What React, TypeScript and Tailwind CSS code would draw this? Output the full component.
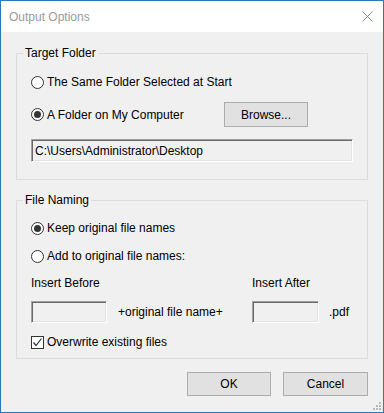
import React, { useState } from 'react';

const font = { fontFamily: '"Liberation Sans", Arial, sans-serif' };

const Radio: React.FC<{ checked: boolean; label: string; onClick: () => void }> = ({ checked, label, onClick }) => (
    <div className="flex items-center h-[20px] cursor-default" onClick={onClick}>
        <span className="w-[13px] h-[13px] rounded-full border border-[#333] bg-white flex items-center justify-center">
            {checked && <span className="w-[7px] h-[7px] rounded-full bg-[#333]"></span>}
        </span>
        <span className="ml-[3px]">{label}</span>
    </div>
);

const Sunken: React.FC<{ className?: string; children?: React.ReactNode }> = ({ className, children }) => (
    <div
        className={`bg-[#f0f0f0] border-t border-l border-[#a0a0a0] border-b border-r border-b-white border-r-white shadow-[inset_1px_1px_0_#696969,inset_-1px_-1px_0_#e3e3e3] ${className ?? ''}`}
    >
        {children}
    </div>
);

const Button: React.FC<{ label: string; className?: string }> = ({ label, className }) => (
    <button
        type="button"
        className={`bg-[#e1e1e1] border border-[#adadad] text-[12px] text-black flex items-center justify-center ${className ?? ''}`}
    >
        {label}
    </button>
);

const App: React.FC = () => {
    const [target, setTarget] = useState<'same' | 'computer'>('computer');
    const [naming, setNaming] = useState<'keep' | 'add'>('keep');
    const [overwrite, setOverwrite] = useState(true);

    return (
        <div style={font} className="w-[384px] h-[413px] border border-[#2b79b8] bg-[#f0f0f0] flex flex-col text-[12px] text-black leading-[14px] select-none">
            {/* Title bar */}
            <div className="h-[31px] bg-white flex items-center justify-between pl-[8px] pr-[9px]">
                <span className="text-[12px] text-[#9a9a9a]">Output Options</span>
                <svg width="11" height="11" viewBox="0 0 11 11" className="mr-[1px]">
                    <path d="M0.5 0.5 L10.5 10.5 M10.5 0.5 L0.5 10.5" stroke="#8a8a8a" strokeWidth="1" />
                </svg>
            </div>

            <div className="flex-1 flex flex-col px-[15px] pt-[14px] relative">
                {/* Target Folder */}
                <fieldset className="border border-[#dcdcdc] px-[14px] pb-[17px]">
                    <legend className="-ml-[8px] px-[2px] leading-[14px]">Target Folder</legend>
                    <div className="mt-[12px]">
                        <Radio checked={target === 'same'} label="The Same Folder Selected at Start" onClick={() => setTarget('same')} />
                    </div>
                    <div className="mt-[10px] flex items-center">
                        <div className="w-[193px]">
                            <Radio checked={target === 'computer'} label="A Folder on My Computer" onClick={() => setTarget('computer')} />
                        </div>
                        <Button label="Browse..." className="w-[84px] h-[25px]" />
                    </div>
                    <Sunken className="mt-[12px] w-[322px] h-[23px] flex items-center pl-[3px]">
                        C:\Users\Administrator\Desktop
                    </Sunken>
                </fieldset>

                {/* File Naming */}
                <fieldset className="mt-[13px] border border-[#dcdcdc] px-[14px] pb-[9px]">
                    <legend className="-ml-[8px] px-[2px] leading-[14px]">File Naming</legend>
                    <div className="mt-[11px]">
                        <Radio checked={naming === 'keep'} label="Keep original file names" onClick={() => setNaming('keep')} />
                    </div>
                    <div className="mt-[8px]">
                        <Radio checked={naming === 'add'} label="Add to original file names:" onClick={() => setNaming('add')} />
                    </div>
                    <div className="mt-[10px] flex">
                        <span className="w-[221px]">Insert Before</span>
                        <span>Insert After</span>
                    </div>
                    <div className="mt-[11px] flex items-center">
                        <Sunken className="w-[76px] h-[22px]" />
                        <span className="ml-[11px] w-[134px]">+original file name+</span>
                        <Sunken className="w-[67px] h-[22px]" />
                        <span className="ml-[10px]">.pdf</span>
                    </div>
                    <div className="mt-[12px] flex items-center h-[14px] cursor-default" onClick={() => setOverwrite(!overwrite)}>
                        <span className="w-[13px] h-[13px] border border-[#333] bg-white flex items-center justify-center">
                            {overwrite && (
                                <svg width="11" height="11" viewBox="0 0 11 11">
                                    <path d="M1.5 5.5 L4 8.5 L9.5 1.5" fill="none" stroke="#333" strokeWidth="1.2" />
                                </svg>
                            )}
                        </span>
                        <span className="ml-[3px]">Overwrite existing files</span>
                    </div>
                </fieldset>

                {/* Buttons */}
                <div className="mt-[13px] flex justify-end gap-[12px]">
                    <Button label="OK" className="w-[84px] h-[24px]" />
                    <Button label="Cancel" className="w-[85px] h-[24px]" />
                </div>

                {/* Size grip */}
                <svg width="10" height="10" viewBox="0 0 10 10" className="absolute right-[1px] bottom-[1px]">
                    <g fill="#b8b8b8">
                        <rect x="7" y="1" width="2" height="2" />
                        <rect x="4" y="4" width="2" height="2" />
                        <rect x="7" y="4" width="2" height="2" />
                        <rect x="1" y="7" width="2" height="2" />
                        <rect x="4" y="7" width="2" height="2" />
                        <rect x="7" y="7" width="2" height="2" />
                    </g>
                </svg>
            </div>
        </div>
    );
};

export default App;
